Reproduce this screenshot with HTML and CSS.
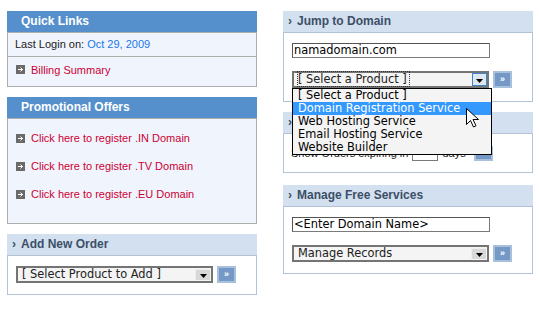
FILE: index.html
```html
<!DOCTYPE html>
<html>
  <head>
    <title>Control Panel</title>
    <link rel="stylesheet" href="styles.css">
  </head>
  <body>
    <div class="page">
      <div class="col">
        <div class="panel blue">
          <div class="head">Quick Links</div>
          <div class="body">
            <div class="login-row">Last Login on: <span class="date">Oct 29, 2009</span></div>
            <div class="link-row">
              <span class="bullet"><svg width="9" height="9" viewBox="0 0 9 9"><rect width="9" height="9" fill="#6a6a6a"/><path d="M2 4.5h4.5M4.5 2.5l2 2-2 2" stroke="#fff" stroke-width="1" fill="none"/></svg></span>
              <a href="#">Billing Summary</a>
            </div>
          </div>
        </div>

        <div class="panel blue">
          <div class="head">Promotional Offers</div>
          <div class="body offers">
            <div class="offer">
              <span class="bullet"><svg width="9" height="9" viewBox="0 0 9 9"><rect width="9" height="9" fill="#6a6a6a"/><path d="M2 4.5h4.5M4.5 2.5l2 2-2 2" stroke="#fff" stroke-width="1" fill="none"/></svg></span>
              <a href="#">Click here to register .IN Domain</a>
            </div>
            <div class="offer">
              <span class="bullet"><svg width="9" height="9" viewBox="0 0 9 9"><rect width="9" height="9" fill="#6a6a6a"/><path d="M2 4.5h4.5M4.5 2.5l2 2-2 2" stroke="#fff" stroke-width="1" fill="none"/></svg></span>
              <a href="#">Click here to register .TV Domain</a>
            </div>
            <div class="offer">
              <span class="bullet"><svg width="9" height="9" viewBox="0 0 9 9"><rect width="9" height="9" fill="#6a6a6a"/><path d="M2 4.5h4.5M4.5 2.5l2 2-2 2" stroke="#fff" stroke-width="1" fill="none"/></svg></span>
              <a href="#">Click here to register .EU Domain</a>
            </div>
          </div>
        </div>

        <div class="panel light">
          <div class="head"><span class="chev">&rsaquo;</span>Add New Order</div>
          <div class="body form">
            <div class="pick">
              <div class="select">
                <span class="value">[ Select Product to Add ]</span>
                <span class="arrow"><svg width="7" height="5" viewBox="0 0 7 5"><path d="M0 0h7L3.5 4z" fill="#000"/></svg></span>
              </div>
              <span class="go">&raquo;</span>
            </div>
          </div>
        </div>
      </div>

      <div class="col">
        <div class="panel light">
          <div class="head"><span class="chev">&rsaquo;</span>Jump to Domain</div>
          <div class="body form jump">
            <div class="field">namadomain.com</div>
            <div class="pick gap">
              <div class="select-wrap">
                <div class="select open">
                  <span class="value"><span class="focus">[ Select a Product ]</span></span>
                  <span class="arrow"><svg width="7" height="5" viewBox="0 0 7 5"><path d="M0 0h7L3.5 4z" fill="#000"/></svg></span>
                </div>
                <div class="options">
                  <div class="opt">[ Select a Product ]</div>
                  <div class="opt on">Domain Registration Service</div>
                  <div class="opt">Web Hosting Service</div>
                  <div class="opt">Email Hosting Service</div>
                  <div class="opt">Website Builder</div>
                  <svg class="cursor" width="13" height="20" viewBox="0 0 13 20"><path d="M0.5 0.5v16l4-4 3 6.5 2.5-1.2-3-6.3h5.5z" fill="#fff" stroke="#000" stroke-width="1"/></svg>
                </div>
              </div>
              <span class="go">&raquo;</span>
            </div>
          </div>
        </div>

        <div class="panel light">
          <div class="head"><span class="chev">&rsaquo;</span>Expiring Orders</div>
          <div class="body expiring">
            <span>Show Orders expiring in</span>
            <span class="days"></span>
            <span>days</span>
            <span class="go small">&raquo;</span>
          </div>
        </div>

        <div class="panel light services">
          <div class="head"><span class="chev">&rsaquo;</span>Manage Free Services</div>
          <div class="body form">
            <div class="field">&lt;Enter Domain Name&gt;</div>
            <div class="pick gap">
              <div class="select">
                <span class="value">Manage Records</span>
                <span class="arrow"><svg width="7" height="5" viewBox="0 0 7 5"><path d="M0 0h7L3.5 4z" fill="#000"/></svg></span>
              </div>
              <span class="go">&raquo;</span>
            </div>
          </div>
        </div>
      </div>
    </div>
  </body>
</html>
```

FILE: styles.css
```css
body {
  margin: 0;
  background: #fff;
  color: #222;
  font-family: "Liberation Sans", Arial, sans-serif;
  font-size: 11px;
}
a {
  color: #cc0033;
  text-decoration: none;
}
.page {
  display: flex;
  gap: 26px;
  padding: 11px 0 0 7px;
}
.col {
  width: 250px;
  display: flex;
  flex-direction: column;
}
.panel {
  margin-bottom: 10px;
}
.head {
  height: 21px;
  line-height: 21px;
  font-size: 12px;
  font-weight: bold;
}
.blue .head {
  background: #5590cd;
  color: #fff;
  padding-left: 14px;
}
.blue .body {
  background: #f0f5fd;
  border: 1px solid #adadad;
}
.light .head {
  background: #d2e0f0;
  color: #3d4f66;
  padding-left: 5px;
}
.light .body {
  background: #fff;
  border: 1px solid #b3c3d6;
}
.chev {
  display: inline-block;
  width: 9px;
  font-size: 12px;
}

/* quick links */
.login-row {
  height: 23px;
  line-height: 23px;
  padding-left: 7px;
  border-bottom: 1px solid #adadad;
}
.date {
  color: #1a75e8;
}
.offer {
  display: flex;
  height: 14px;
  align-items: center;
}
.link-row {
  display: flex;
  height: 29px;
  box-sizing: border-box;
  padding: 6px 0 0 8px;
  line-height: 14px;
  align-items: flex-start;
}
.bullet {
  width: 9px;
  height: 9px;
  margin-right: 6px;
  display: flex;
}
.link-row .bullet {
  margin-top: 2px;
}
.offers {
  padding: 12px 0 22px 8px;
  display: flex;
  flex-direction: column;
  gap: 14px;
}

/* form bits */
.form {
  padding: 10px 0 11px 8px;
}
.jump {
  padding-bottom: 13px;
}
.pick {
  display: flex;
  align-items: flex-start;
}
.pick.gap {
  margin-top: 13px;
}
.field {
  width: 198px;
  height: 15px;
  box-sizing: border-box;
  border: 1px solid #7a7a7a;
  border-top-color: #555;
  border-left-color: #555;
  font-family: "DejaVu Sans", Verdana, sans-serif;
  font-size: 11.4px;
  line-height: 13px;
  padding-left: 1px;
  color: #000;
  background: #fff;
}
.select-wrap {
  position: relative;
}
.select {
  width: 197px;
  height: 17px;
  box-sizing: border-box;
  border: 2px solid #747474;
  background: #f4f4f4;
  display: flex;
  justify-content: space-between;
  font-family: "DejaVu Sans", Verdana, sans-serif;
  font-size: 11.4px;
  line-height: 13px;
  color: #222;
}
.value {
  padding-left: 4px;
}
.focus {
  outline: 1px dotted #333;
  padding-right: 2px;
}
.arrow {
  width: 15px;
  height: 11px;
  margin: 1px;
  background: #d8d8d8;
  border-top: 1px solid #eee;
  border-left: 1px solid #eee;
  display: flex;
  align-items: flex-end;
  justify-content: center;
  padding-bottom: 1px;
  box-sizing: border-box;
}
.open .arrow {
  border: 1px solid #3f84c6;
  height: 13px;
  margin: 0;
  background: #dde8f2;
}
.go {
  width: 19px;
  height: 17px;
  box-sizing: border-box;
  margin-left: 4px;
  background: #7599c6;
  border: 2px solid #a9c0dc;
  color: #fff;
  font-size: 9px;
  font-weight: bold;
  line-height: 12px;
  text-align: center;
}

/* open list */
.options {
  position: absolute;
  top: 100%;
  left: 0;
  width: 198px;
  border: 1px solid #000;
  background: #f4f4f4;
  font-family: "DejaVu Sans", Verdana, sans-serif;
  font-size: 11.4px;
  line-height: 13px;
  color: #000;
  z-index: 5;
}
.opt {
  padding-left: 5px;
}
.opt.on {
  background: #3399ff;
  color: #fff;
}
.cursor {
  position: absolute;
  left: 173px;
  top: 19px;
}

/* expiring orders */
.expiring {
  height: 26px;
  padding: 12px 0 0 7px;
  display: flex;
  align-items: flex-start;
  gap: 4px;
}
.expiring span {
  line-height: 14px;
}
.days {
  width: 24px;
  height: 13px;
  border: 1px solid #7a7a7a;
  background: #fff;
}
.go.small {
  height: 15px;
  line-height: 11px;
}
.services {
  margin-top: 2px;
}
```
